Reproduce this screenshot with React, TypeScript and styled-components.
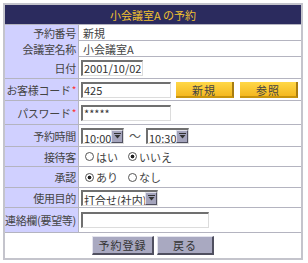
import React from "react";
import styled, { createGlobalStyle } from "styled-components";

const Global = createGlobalStyle`
  html, body { margin: 0; padding: 0; background: #fff; }
  body {
    font-family: "Noto Sans CJK JP", "Noto Sans", sans-serif;
    font-size: 11px;
    color: #444;
  }
  * { box-sizing: border-box; }
`;

const Page = styled.div`
  padding: 3px 0 0 3px;
`;

const Form = styled.form`
  width: 300px;
  border: 2px solid #c4c4cc;
  background: #fff;
`;

const Header = styled.div`
  height: 20px;
  background: #2b2b5e;
  color: #f0c030;
  display: flex;
  align-items: center;
  justify-content: center;
  border-bottom: 1px solid #b4b4c0;
  font-size: 11px;
  white-space: pre;
`;

const Row = styled.div<{ $h: number }>`
  display: grid;
  grid-template-columns: 74px 1fr;
  height: ${(p) => p.$h}px;
  border-bottom: 1px solid #b4b4c0;
`;

const Label = styled.div`
  background: #d0d0ff;
  border-right: 1px solid #b4b4c0;
  display: flex;
  align-items: center;
  justify-content: flex-end;
  padding-right: 2px;
  white-space: nowrap;
  color: #444;
  letter-spacing: -0.3px;
`;

const Req = styled.span`
  color: #ff3030;
  font-size: 10px;
  margin-left: 1px;
`;

const Value = styled.div<{ $gap?: number }>`
  display: flex;
  align-items: center;
  padding-left: 2px;
  gap: ${(p) => p.$gap ?? 5}px;
  color: #444;
  white-space: nowrap;
`;

const PlainText = styled.span`
  padding-left: 2px;
`;

const TextInput = styled.input<{ $w: number }>`
  width: ${(p) => p.$w}px;
  height: 16px;
  border-style: solid;
  border-width: 2px 1px 1px 2px;
  border-color: #707070 #dcdcdc #dcdcdc #707070;
  padding: 0 1px;
  font: inherit;
  font-size: 11px;
  color: #333;
  background: #fff;
  outline: none;
`;

const YellowButton = styled.button`
  width: 58px;
  height: 16px;
  background: linear-gradient(#ffd848, #f4b820);
  border: none;
  border-right: 2px solid #a87c10;
  border-bottom: 2px solid #c8940c;
  color: #444;
  font: inherit;
  font-size: 11px;
  padding: 0;
  letter-spacing: 1px;
`;

const ButtonRow = styled.div`
  height: 25px;
  display: flex;
  align-items: center;
  justify-content: center;
  gap: 3px;
`;

const GrayButton = styled.button<{ $w: number }>`
  width: ${(p) => p.$w}px;
  height: 19px;
  background: #a9a9c1;
  border-style: solid;
  border-width: 1px 2px 2px 1px;
  border-color: #e4e4ee #505060 #505060 #e4e4ee;
  color: #333;
  font: inherit;
  font-size: 11px;
  padding: 0;
  letter-spacing: 1px;
`;

const RadioLabel = styled.label`
  display: inline-flex;
  align-items: center;
  gap: 2px;
  margin-right: 6px;
`;

const Radio = styled.input.attrs({ type: "radio" })`
  appearance: none;
  width: 9px;
  height: 9px;
  margin: 0 0 0 4px;
  border: 1px solid #555;
  border-radius: 50%;
  background: #fff;
  &:checked {
    background: radial-gradient(circle, #222 0 1.6px, #fff 2.2px);
  }
`;

const SelectBox = styled.span<{ $w: number }>`
  display: inline-flex;
  width: ${(p) => p.$w}px;
  height: 16px;
  border-style: solid;
  border-width: 2px 1px 1px 2px;
  border-color: #707070 #dcdcdc #dcdcdc #707070;
  background: #fff;
`;

const SelectNative = styled.select`
  appearance: none;
  border: none;
  flex: 1;
  min-width: 0;
  font: inherit;
  font-size: 11px;
  color: #333;
  padding: 0 0 0 1px;
  background: transparent;
  outline: none;
`;

const ArrowBox = styled.span`
  width: 12px;
  background: #a4a4bc;
  border: 1px solid #e0e0ea;
  border-right-color: #505060;
  border-bottom-color: #505060;
  display: flex;
  align-items: center;
  justify-content: center;
`;

const Tilde = styled.span`
  font-size: 12px;
  color: #555;
`;

const Select = ({ w, value }: { w: number; value: string }) => (
  <SelectBox $w={w}>
    <SelectNative defaultValue={value}>
      <option>{value}</option>
    </SelectNative>
    <ArrowBox>
      <svg width="7" height="6" viewBox="0 0 7 6">
        <rect x="0" y="0" width="7" height="1" fill="#333" />
        <path d="M0.5 2 L6.5 2 L3.5 5.5 Z" fill="#333" />
      </svg>
    </ArrowBox>
  </SelectBox>
);

export default function App() {
  return (
    <>
      <Global />
      <Page>
        <Form onSubmit={(e) => e.preventDefault()}>
          <Header>小会議室A の予約</Header>
          <Row $h={16}>
            <Label>予約番号</Label>
            <Value>
              <PlainText>新規</PlainText>
            </Value>
          </Row>
          <Row $h={16}>
            <Label>会議室名称</Label>
            <Value>
              <PlainText>小会議室A</PlainText>
            </Value>
          </Row>
          <Row $h={22}>
            <Label>日付</Label>
            <Value>
              <TextInput $w={62} defaultValue="2001/10/02" />
            </Value>
          </Row>
          <Row $h={22}>
            <Label>
              お客様コード<Req>*</Req>
            </Label>
            <Value>
              <TextInput $w={90} defaultValue="425" />
              <YellowButton type="button">新規</YellowButton>
              <YellowButton type="button" style={{ marginLeft: 1 }}>参照</YellowButton>
            </Value>
          </Row>
          <Row $h={24}>
            <Label>
              パスワード<Req>*</Req>
            </Label>
            <Value>
              <TextInput $w={90} defaultValue="*****" />
            </Value>
          </Row>
          <Row $h={22}>
            <Label>予約時間</Label>
            <Value>
              <Select w={43} value="10:00" />
              <Tilde>〜</Tilde>
              <Select w={43} value="10:30" />
            </Value>
          </Row>
          <Row $h={20}>
            <Label>接待客</Label>
            <Value $gap={0}>
              <RadioLabel>
                <Radio name="guest" />
                はい
              </RadioLabel>
              <RadioLabel>
                <Radio name="guest" defaultChecked />
                いいえ
              </RadioLabel>
            </Value>
          </Row>
          <Row $h={21}>
            <Label>承認</Label>
            <Value $gap={0}>
              <RadioLabel>
                <Radio name="approve" defaultChecked />
                あり
              </RadioLabel>
              <RadioLabel>
                <Radio name="approve" />
                なし
              </RadioLabel>
            </Value>
          </Row>
          <Row $h={20}>
            <Label>使用目的</Label>
            <Value>
              <Select w={77} value="打合せ(社内)" />
            </Value>
          </Row>
          <Row $h={25}>
            <Label>連絡欄(要望等)</Label>
            <Value>
              <TextInput $w={128} />
            </Value>
          </Row>
          <ButtonRow>
            <GrayButton type="button" $w={62}>予約登録</GrayButton>
            <GrayButton type="button" $w={57}>戻る</GrayButton>
          </ButtonRow>
        </Form>
      </Page>
    </>
  );
}
